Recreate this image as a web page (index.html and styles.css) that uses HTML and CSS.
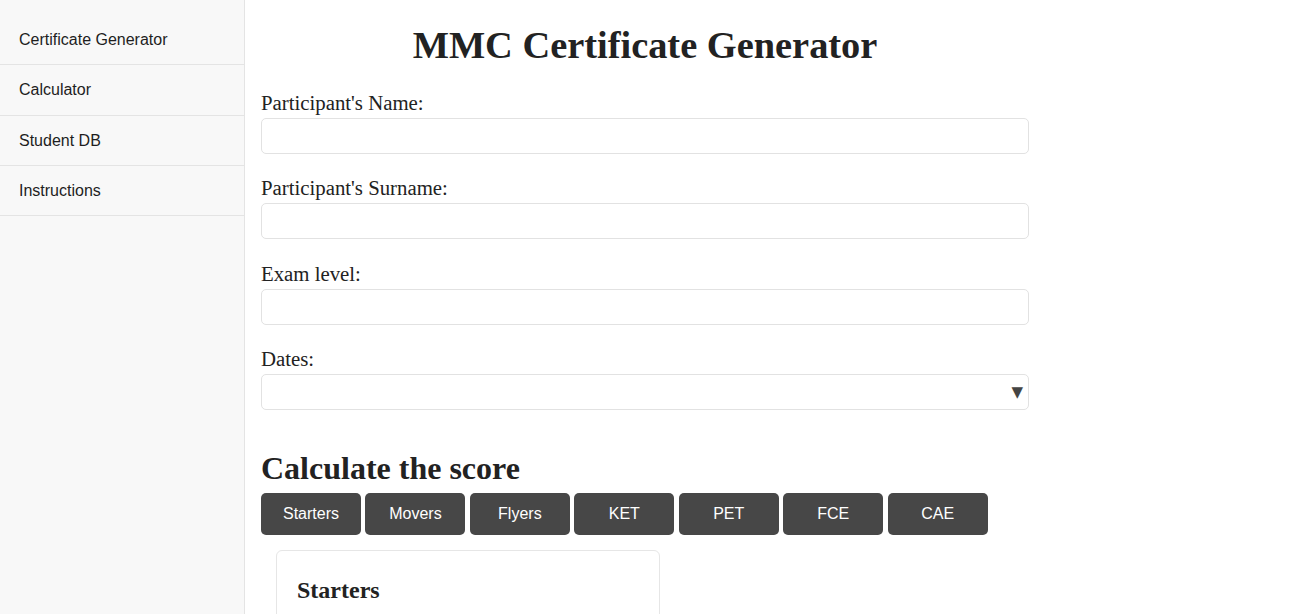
FILE: index.html
```html
<!DOCTYPE html>
<html lang="en">
<head>
<meta charset="utf-8">
<title>MMC Certificate Generator</title>
<link rel="stylesheet" href="styles.css">
</head>
<body>
<div class="layout">
  <nav class="sidebar">
    <ul class="nav-list">
      <li class="nav-item">Certificate Generator</li>
      <li class="nav-item">Calculator</li>
      <li class="nav-item">Student DB</li>
      <li class="nav-item">Instructions</li>
    </ul>
  </nav>
  <main class="main">
    <div class="container">
      <h1 class="title">MMC Certificate Generator</h1>
      <div class="field">
        <label class="label">Participant's Name:</label>
        <input class="input" type="text">
      </div>
      <div class="field">
        <label class="label">Participant's Surname:</label>
        <input class="input" type="text">
      </div>
      <div class="field">
        <label class="label">Exam level:</label>
        <input class="input" type="text">
      </div>
      <div class="field">
        <label class="label">Dates:</label>
        <div class="select-wrap">
          <select class="input select"></select>
          <span class="select-arrow">▼</span>
        </div>
      </div>
    </div>
    <h2 class="section-title">Calculate the score</h2>
    <div class="tabs">
      <button class="tab">Starters</button>
      <button class="tab">Movers</button>
      <button class="tab">Flyers</button>
      <button class="tab">KET</button>
      <button class="tab">PET</button>
      <button class="tab">FCE</button>
      <button class="tab">CAE</button>
    </div>
    <div class="card">
      <h3 class="card-title">Starters</h3>
    </div>
  </main>
</div>
</body>
</html>
```
FILE: styles.css
```css
html, body {
  margin: 0;
  padding: 0;
  height: 100%;
  background: #ffffff;
  color: #222222;
  font-family: "Liberation Serif", "Times New Roman", serif;
  overflow: hidden;
}

.layout {
  display: flex;
  min-height: 100%;
}

.sidebar {
  width: 244px;
  flex: none;
  background: #f8f8f8;
  border-right: 1px solid #e4e4e4;
  padding-top: 15px;
  min-height: 614px;
  box-sizing: content-box;
}

.nav-list {
  list-style: none;
  margin: 0;
  padding: 0;
}

.nav-item {
  font-family: "Liberation Sans", Arial, sans-serif;
  font-size: 16px;
  line-height: 19.3px;
  padding: 15px 19px;
  color: #1e1e1e;
  border-bottom: 1px solid #e4e4e4;
}

.main {
  flex: 1;
  padding: 23px 16px 0 16px;
}

.container {
  width: 768px;
}

.title {
  margin: 0 0 24px 0;
  font-size: 38.4px;
  line-height: 44px;
  font-weight: bold;
  text-align: center;
  color: #222222;
}

.field {
  display: flex;
  flex-direction: column;
  margin-bottom: 22.3px;
}

.label {
  font-size: 20.8px;
  line-height: 24px;
  margin-bottom: 3px;
  color: #222222;
}

.input {
  display: block;
  width: 768px;
  height: 36px;
  box-sizing: border-box;
  border: 1px solid #e2e2e2;
  border-radius: 5px;
  background: #ffffff;
  padding: 0 10px;
  font-size: 16px;
  margin: 0;
}

.select-wrap {
  position: relative;
  width: 768px;
}

.select {
  -webkit-appearance: none;
  appearance: none;
}

.select-arrow {
  position: absolute;
  right: 6px;
  top: 9px;
  font-family: "DejaVu Sans", sans-serif;
  font-size: 15px;
  line-height: 18px;
  color: #444444;
  pointer-events: none;
}

.section-title {
  margin: 40px 0 6px 0;
  font-size: 32px;
  line-height: 37px;
  font-weight: bold;
  color: #222222;
}

.tabs {
  display: flex;
  gap: 4.45px;
}

.tab {
  width: 100px;
  height: 42px;
  border: none;
  border-radius: 5px;
  background: #474747;
  color: #ffffff;
  font-family: "Liberation Sans", Arial, sans-serif;
  font-size: 16px;
  padding: 0;
}

.card {
  margin: 15px 0 0 15px;
  width: 384px;
  box-sizing: border-box;
  border: 1px solid #e6e6e6;
  border-radius: 6px;
  padding: 26px 20px 20px 20px;
  height: 120px;
}

.card-title {
  margin: 0;
  font-size: 24px;
  line-height: 27px;
  font-weight: bold;
  color: #222222;
}
```
